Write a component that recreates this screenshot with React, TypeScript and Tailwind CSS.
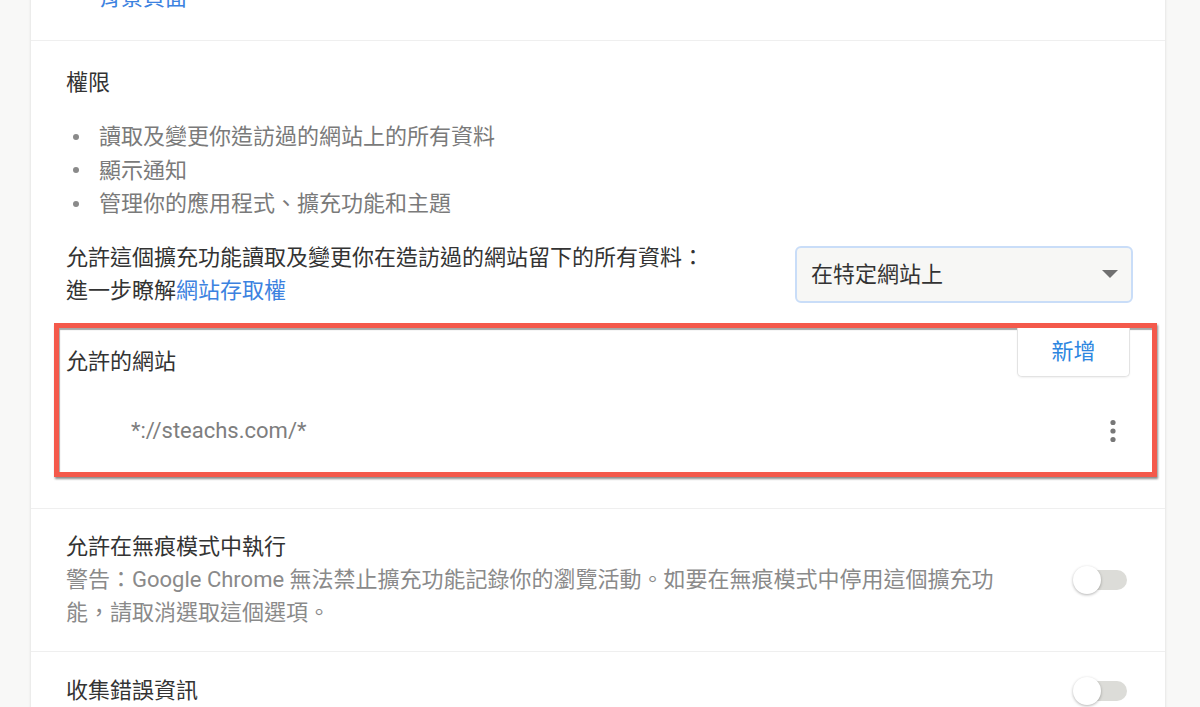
import { Fragment } from 'react';

const FONT = { fontFamily: 'Roboto, "Noto Sans CJK TC", "Noto Sans", sans-serif' };

const PERMISSIONS = ['讀取及變更你造訪過的網站上的所有資料', '顯示通知', '管理你的應用程式、擴充功能和主題'];

function Bullet({ children, className = '' }: { children: React.ReactNode; className?: string }) {
  return (
    <div className={`flex items-center h-[33.5px] ${className}`}>
      <span className="w-[20px] ml-[-33px] flex justify-center">
        <span className="w-[6px] h-[6px] rounded-full bg-[#8a8a8a]" />
      </span>
      <span className="ml-[13px]">{children}</span>
    </div>
  );
}

function Toggle() {
  return (
    <div className="relative w-[54px] h-[28px] mr-[6px] flex-shrink-0">
      <div className="absolute right-0 top-[4px] w-[40px] h-[20px] rounded-full bg-[#dcdcd8]" />
      <div className="absolute left-0 top-0 w-[28px] h-[28px] rounded-full bg-white shadow-[0_1px_3px_rgba(0,0,0,0.3)]" />
    </div>
  );
}

export default function App() {
  return (
    <div className="h-[707px] overflow-hidden bg-[#f8f8f7] text-[22px] text-[#333]" style={FONT}>
      <div className="ml-[31px] w-[1134px] -mt-[40px] bg-white shadow-[0_0_3px_rgba(0,0,0,0.13)]">
        {/* Inspect views (clipped) */}
        <div className="pl-[68px] pr-[32px] pt-[20.5px] pb-[25.5px] border-b border-[#efefef]">
          <Bullet className="text-[#3c82e0]">背景頁面</Bullet>
        </div>

        {/* Permissions */}
        <div className="pl-[35px] pr-[32px] pt-[25.5px] pb-[31px] border-b border-[#efefef]">
          <div className="leading-[33px]">權限</div>
          <div className="mt-[21px] pl-[33px] text-[#7a7a7a]">
            {PERMISSIONS.map((p) => (
              <Fragment key={p}>
                <Bullet>{p}</Bullet>
              </Fragment>
            ))}
          </div>

          <div className="mt-[20.5px] flex items-center justify-between">
            <div className="leading-[33px]">
              <div>允許這個擴充功能讀取及變更你在造訪過的網站留下的所有資料：</div>
              <div>
                進一步瞭解<span className="text-[#3c82e0]">網站存取權</span>
              </div>
            </div>
            <div className="w-[338px] h-[57px] rounded-[6px] border-2 border-[#c9ddf8] bg-[#f7f7f5] flex items-center justify-between pl-[14px] pr-[13px]">
              <span>在特定網站上</span>
              <svg width="16" height="8" viewBox="0 0 16 8">
                <path d="M0 0 L16 0 L8 8 Z" fill="#707070" />
              </svg>
            </div>
          </div>

          {/* Allowed sites (highlighted) */}
          <div className="mt-[15.5px] -ml-[12px] -mr-[24px] border-[5px] border-[#f4594b] shadow-[1px_2px_2px_rgba(0,0,0,0.45),inset_1px_2px_1px_rgba(0,0,0,0.35)] pl-[7px] pr-[22px] pb-[13px]">
            <div className="flex items-start justify-between">
              <div className="mt-[17.5px] leading-[33px]">允許的網站</div>
              <button className="h-[49px] w-[113px] rounded-b-[5px] border border-t-0 border-[#e3e3e3] bg-white text-[#2d86e0] shadow-[0_1px_2px_rgba(0,0,0,0.06)]">
                新增
              </button>
            </div>
            <div className="mt-[24.5px] h-[56px] flex items-center justify-between">
              <span className="pl-[65px] text-[#7e7e7e]">*://steachs.com/*</span>
              <span className="w-[34px] flex justify-center">
                <svg width="6" height="24" viewBox="0 0 6 24">
                  <circle cx="3" cy="3.5" r="2.6" fill="#777" />
                  <circle cx="3" cy="12" r="2.6" fill="#777" />
                  <circle cx="3" cy="20.5" r="2.6" fill="#777" />
                </svg>
              </span>
            </div>
          </div>
        </div>

        {/* Incognito */}
        <div className="pl-[35px] pr-[32px] pt-[21.5px] pb-[21.5px] border-b border-[#efefef] flex items-center justify-between">
          <div className="w-[945px] leading-[33px]">
            <div>允許在無痕模式中執行</div>
            <div className="text-[#8a8a8a]">
              警告：Google Chrome 無法禁止擴充功能記錄你的瀏覽活動。如要在無痕模式中停用這個擴充功能，請取消選取這個選項。
            </div>
          </div>
          <Toggle />
        </div>

        {/* Errors */}
        <div className="pl-[35px] pr-[32px] pt-[22.5px] pb-[22px] flex items-center justify-between">
          <div className="leading-[33px]">收集錯誤資訊</div>
          <Toggle />
        </div>
      </div>
    </div>
  );
}
